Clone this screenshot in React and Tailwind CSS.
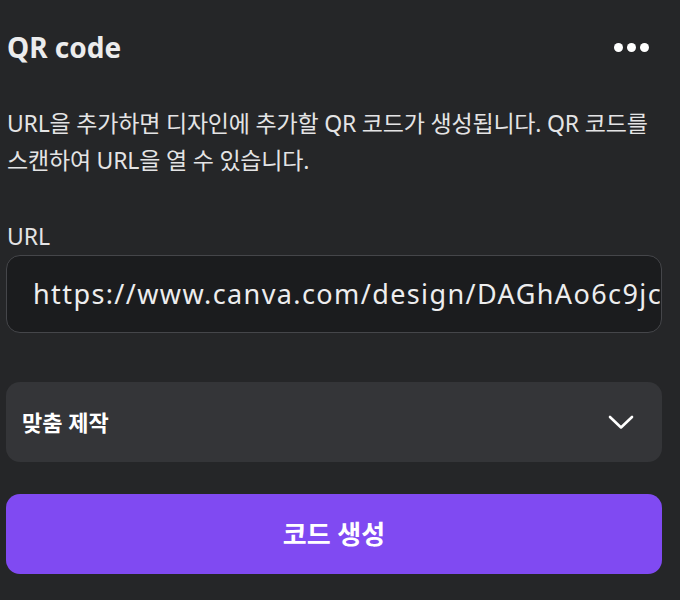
const font = { fontFamily: '"Noto Sans", "Noto Sans CJK KR", sans-serif' };

export default function App() {
    return (
        <div style={font} className="w-[680px] h-[600px] bg-[#252628] text-[#e9e9ea] pl-[6px] pr-[18px] pt-[26px] overflow-hidden">
            {/* En-tête */}
            <div className="flex items-center justify-between h-[42px] pl-[1px]">
                <h1 className="text-[28px] font-bold text-[#ececed] leading-none">QR code</h1>
                <div className="flex items-center gap-[4px] mr-[13px]">
                    <span className="w-[9px] h-[9px] rounded-full bg-white" />
                    <span className="w-[9px] h-[9px] rounded-full bg-white" />
                    <span className="w-[9px] h-[9px] rounded-full bg-white" />
                </div>
            </div>

            <p className="mt-[37px] text-[23px] leading-[37px] pl-[1px] text-[#e4e4e5] tracking-[-0.2px]">
                URL을 추가하면 디자인에 추가할 QR 코드가 생성됩니다. QR 코드를 스캔하여 URL을 열 수 있습니다.
            </p>

            <label className="block mt-[42px] text-[23px] leading-[30px] pl-[1px] text-[#e4e4e5]">URL</label>
            <div className="mt-[4px] h-[78px] rounded-[14px] border border-[#45464a] bg-[#1b1c1e] flex items-center pl-[26px] pr-[1px] overflow-hidden">
                <span className="text-[27px] text-[#ededee] whitespace-nowrap overflow-hidden tracking-[1.4px]">
                    https://www.canva.com/design/DAGhAo6c9jcQR
                </span>
            </div>

            <button className="mt-[49px] w-full h-[80px] rounded-[14px] bg-[#343538] flex items-center justify-between pl-[16px] pr-[28px]">
                <span className="text-[22px] font-bold text-white">맞춤 제작</span>
                <svg width="26" height="15" viewBox="0 0 26 15" fill="none" stroke="white" strokeWidth="2.6" strokeLinecap="round" strokeLinejoin="round">
                    <path d="M2 2 L13 12.5 L24 2" />
                </svg>
            </button>

            <button className="mt-[32px] w-full h-[80px] rounded-[14px] bg-[#804af2] flex items-center justify-center">
                <span className="text-[26px] font-bold text-white">코드 생성</span>
            </button>
        </div>
    );
}
